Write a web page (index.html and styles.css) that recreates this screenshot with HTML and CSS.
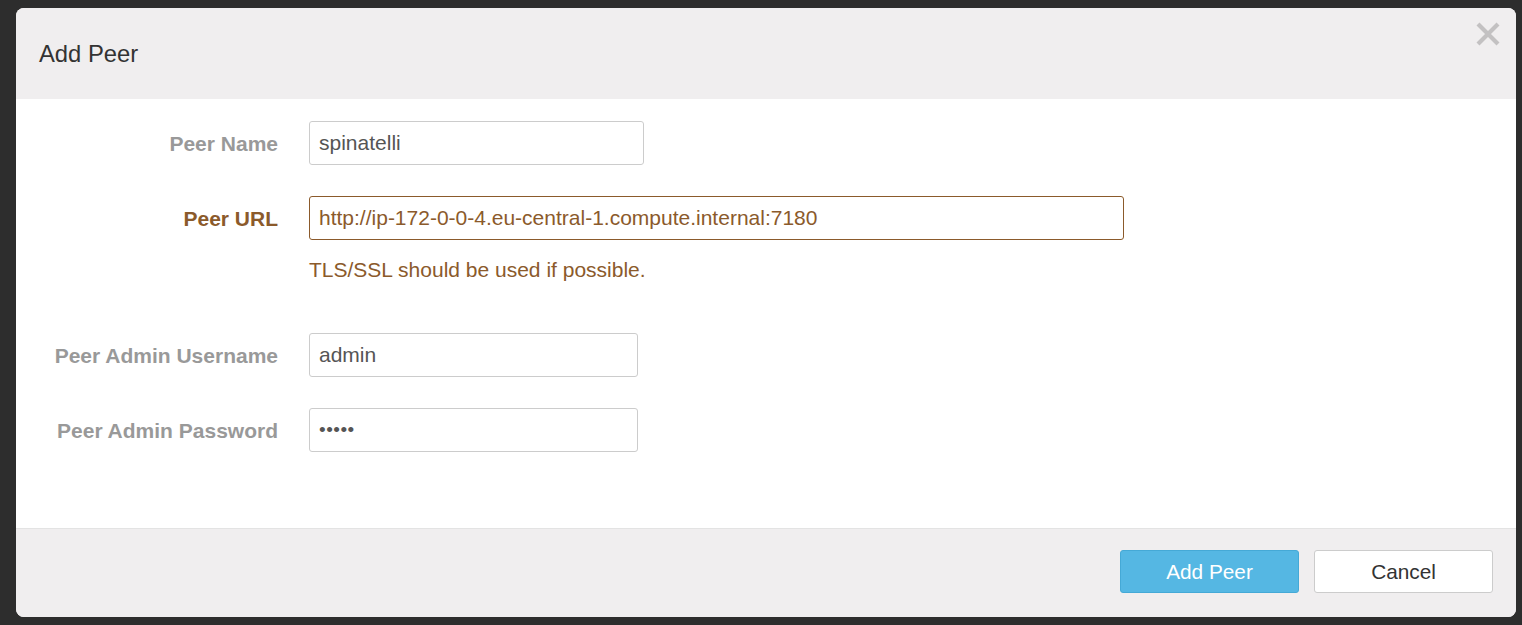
FILE: index.html
```html
<!DOCTYPE html>
<html>
<head>
<meta charset="utf-8">
<link rel="stylesheet" href="styles.css">
</head>
<body>
<div class="modal">
  <div class="modal-header">
    <h4 class="modal-title">Add Peer</h4>
    <button class="close" aria-label="Close">
      <svg width="26" height="26" viewBox="0 0 26 26"><path d="M3 3 L23 23 M23 3 L3 23" stroke="#c3c1c2" stroke-width="4.2" fill="none"/></svg>
    </button>
  </div>
  <div class="modal-body">
    <div class="form-row">
      <label class="label">Peer Name</label>
      <div class="control"><input class="input w-name" type="text" value="spinatelli"></div>
    </div>
    <div class="form-row warning">
      <label class="label">Peer URL</label>
      <div class="control">
        <input class="input w-url" type="text" value="http://ip-172-0-0-4.eu-central-1.compute.internal:7180">
        <p class="help">TLS/SSL should be used if possible.</p>
      </div>
    </div>
    <div class="form-row">
      <label class="label">Peer Admin Username</label>
      <div class="control"><input class="input w-user" type="text" value="admin"></div>
    </div>
    <div class="form-row">
      <label class="label">Peer Admin Password</label>
      <div class="control"><input class="input w-user pw" type="password" value="admin"></div>
    </div>
  </div>
  <div class="modal-footer">
    <button class="btn btn-primary">Add Peer</button>
    <button class="btn btn-default">Cancel</button>
  </div>
</div>
</body>
</html>
```
FILE: styles.css
```css
* { box-sizing: border-box; }
html, body { margin: 0; padding: 0; }
body {
  background: #2d2d2d;
  font-family: "Liberation Sans", Arial, sans-serif;
  width: 1522px;
  height: 625px;
  overflow: hidden;
}
.modal {
  margin: 8px 0 0 16px;
  width: 1500px;
  height: 609px;
  background: #ffffff;
  border-radius: 8px;
  overflow: hidden;
  display: flex;
  flex-direction: column;
}
.modal-header {
  position: relative;
  height: 91px;
  background: #f0eeef;
  display: flex;
  align-items: center;
  padding-left: 23px;
}
.modal-title {
  margin: 0;
  font-weight: normal;
  font-size: 23.8px;
  color: #333;
}
.close {
  position: absolute;
  right: 15px;
  top: 13px;
  border: 0;
  background: none;
  padding: 0;
  width: 26px;
  height: 26px;
  cursor: pointer;
}
.close svg { display: block; }
.modal-body {
  height: 430px;
  padding-top: 22px;
  border-bottom: 1px solid #e3e3e3;
}
.form-row {
  display: grid;
  grid-template-columns: 262px auto;
  column-gap: 31px;
  margin-bottom: 31px;
}
.label {
  text-align: right;
  font-weight: bold;
  font-size: 21px;
  color: #999999;
  height: 44px;
  line-height: 45px;
  white-space: nowrap;
}
.input {
  display: block;
  height: 44px;
  border: 1px solid #cccccc;
  border-radius: 3px;
  padding: 0 9px;
  font-family: "Liberation Sans", Arial, sans-serif;
  font-size: 21px;
  color: #555555;
  background: #fff;
  outline: none;
}
.input.pw { font-size: 19px; letter-spacing: 0.5px; }
.w-name { width: 335px; }
.w-url { width: 815px; }
.w-user { width: 329px; }
.warning .label { color: #8b5a2b; }
.warning .input { border-color: #8b5a2b; color: #8b5a2b; }
.help {
  margin: 17px 0 0 0;
  font-size: 21px;
  line-height: 26px;
  color: #8b5a2b;
}
.warning { margin-bottom: 50px; }
.modal-footer {
  flex: 1;
  background: #f0eeef;
  display: flex;
  justify-content: flex-end;
  align-items: flex-start;
  padding: 21px 23px 0 0;
  gap: 15px;
}
.btn {
  width: 179px;
  height: 43px;
  border-radius: 3px;
  font-family: "Liberation Sans", Arial, sans-serif;
  font-size: 20.8px;
  cursor: pointer;
  padding: 0;
}
.btn-primary {
  background: #55b7e3;
  border: 1px solid #45a9d6;
  color: #ffffff;
}
.btn-default {
  background: #ffffff;
  border: 1px solid #cccccc;
  color: #333333;
}
```
